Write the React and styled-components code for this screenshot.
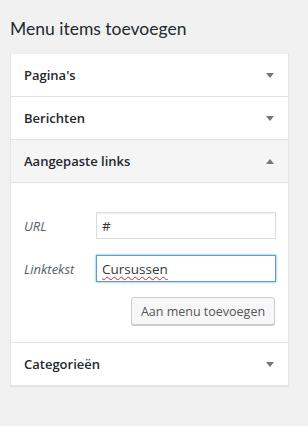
import styled, { createGlobalStyle } from "styled-components";

const GlobalStyle = createGlobalStyle`
    body {
        margin: 0;
        background: #f1f1f1;
        font-family: "Open Sans", "Noto Sans", sans-serif;
        color: #23282d;
    }
`;

const Page = styled.div`
    width: 308px;
    height: 426px;
    padding: 0 0 0 10px;
    box-sizing: border-box;
`;

const Title = styled.h2`
    margin: 0;
    height: 53px;
    line-height: 57px;
    font-family: Lato, "Open Sans", sans-serif;
    font-size: 17.5px;
    font-weight: 400;
    color: #23282d;
`;

const Panel = styled.div`
    width: 279px;
    background: #fff;
    border: 1px solid #e5e5e5;
    border-top-color: #eee;
    box-sizing: border-box;
    box-shadow: 0 1px 1px rgba(0, 0, 0, 0.06);
`;

const Section = styled.section`
    border-top: ${(p) => (p.$first ? "none" : "1px solid #e2e2e2")};
`;

const Header = styled.div`
    display: flex;
    align-items: center;
    justify-content: space-between;
    height: 42px;
    padding: 0 14px 0 13px;
    background: ${(p) => (p.$open ? "#f5f5f5" : "#fff")};
    border-bottom: ${(p) => (p.$open ? "1px solid #e2e2e2" : "none")};
    font-size: 13px;
    font-weight: 600;
    color: #23282d;
`;

const Arrow = styled.span`
    width: 0;
    height: 0;
    border-left: 4px solid transparent;
    border-right: 4px solid transparent;
    ${(p) =>
        p.$up
            ? "border-bottom: 5px solid #72777c;"
            : "border-top: 5px solid #72777c;"}
`;

const Body = styled.div`
    padding: 29px 13px 17px 13px;
    display: flex;
    flex-direction: column;
    gap: 16px;
`;

const Row = styled.label`
    display: grid;
    grid-template-columns: 72px 1fr;
    align-items: center;
`;

const Label = styled.span`
    font-style: italic;
    font-size: 13px;
    color: #555d66;
`;

// text field; the focused one shows the browser's spell-check squiggle
const Field = styled.div`
    display: flex;
    align-items: center;
    height: 27px;
    box-sizing: border-box;
    width: 180px;
    padding: 0 5px;
    font-size: 13.5px;
    color: #32373c;
    background: #fff;
    border: 1px solid ${(p) => (p.$focus ? "#5b9dd9" : "#ddd")};
    box-shadow: ${(p) =>
        p.$focus ? "0 0 2px rgba(30, 140, 190, 0.8)" : "inset 0 1px 2px rgba(0,0,0,.07)"};
`;

const Misspelled = styled.span`
    text-decoration: underline wavy #e02020;
    text-decoration-thickness: 1px;
    text-underline-offset: 2px;
`;

const Actions = styled.div`
    display: flex;
    justify-content: flex-end;
    margin-top: -1px;
`;

const Button = styled.button`
    height: 28px;
    width: 144px;
    padding: 0;
    white-space: nowrap;
    font-family: inherit;
    font-size: 12.5px;
    color: #555;
    background: #f7f7f7;
    border: 1px solid #ccc;
    border-radius: 3px;
    box-shadow: 0 1px 0 #ccc;
    cursor: pointer;
`;

const sections = [
    { title: "Pagina's" },
    { title: "Berichten" },
    { title: "Aangepaste links", open: true },
    { title: "Categorieën" },
];

export default function App() {
    return (
        <Page>
            <GlobalStyle />
            <Title>Menu items toevoegen</Title>
            <Panel>
                {sections.map((s, i) => (
                    <Section key={s.title} $first={i === 0}>
                        <Header $open={s.open}>
                            {s.title}
                            <Arrow $up={s.open} />
                        </Header>
                        {s.open && (
                            <Body>
                                <Row>
                                    <Label>URL</Label>
                                    <Field>#</Field>
                                </Row>
                                <Row>
                                    <Label>Linktekst</Label>
                                    <Field $focus>
                                        <Misspelled>Cursussen</Misspelled>
                                    </Field>
                                </Row>
                                <Actions>
                                    <Button>Aan menu toevoegen</Button>
                                </Actions>
                            </Body>
                        )}
                    </Section>
                ))}
            </Panel>
        </Page>
    );
}
